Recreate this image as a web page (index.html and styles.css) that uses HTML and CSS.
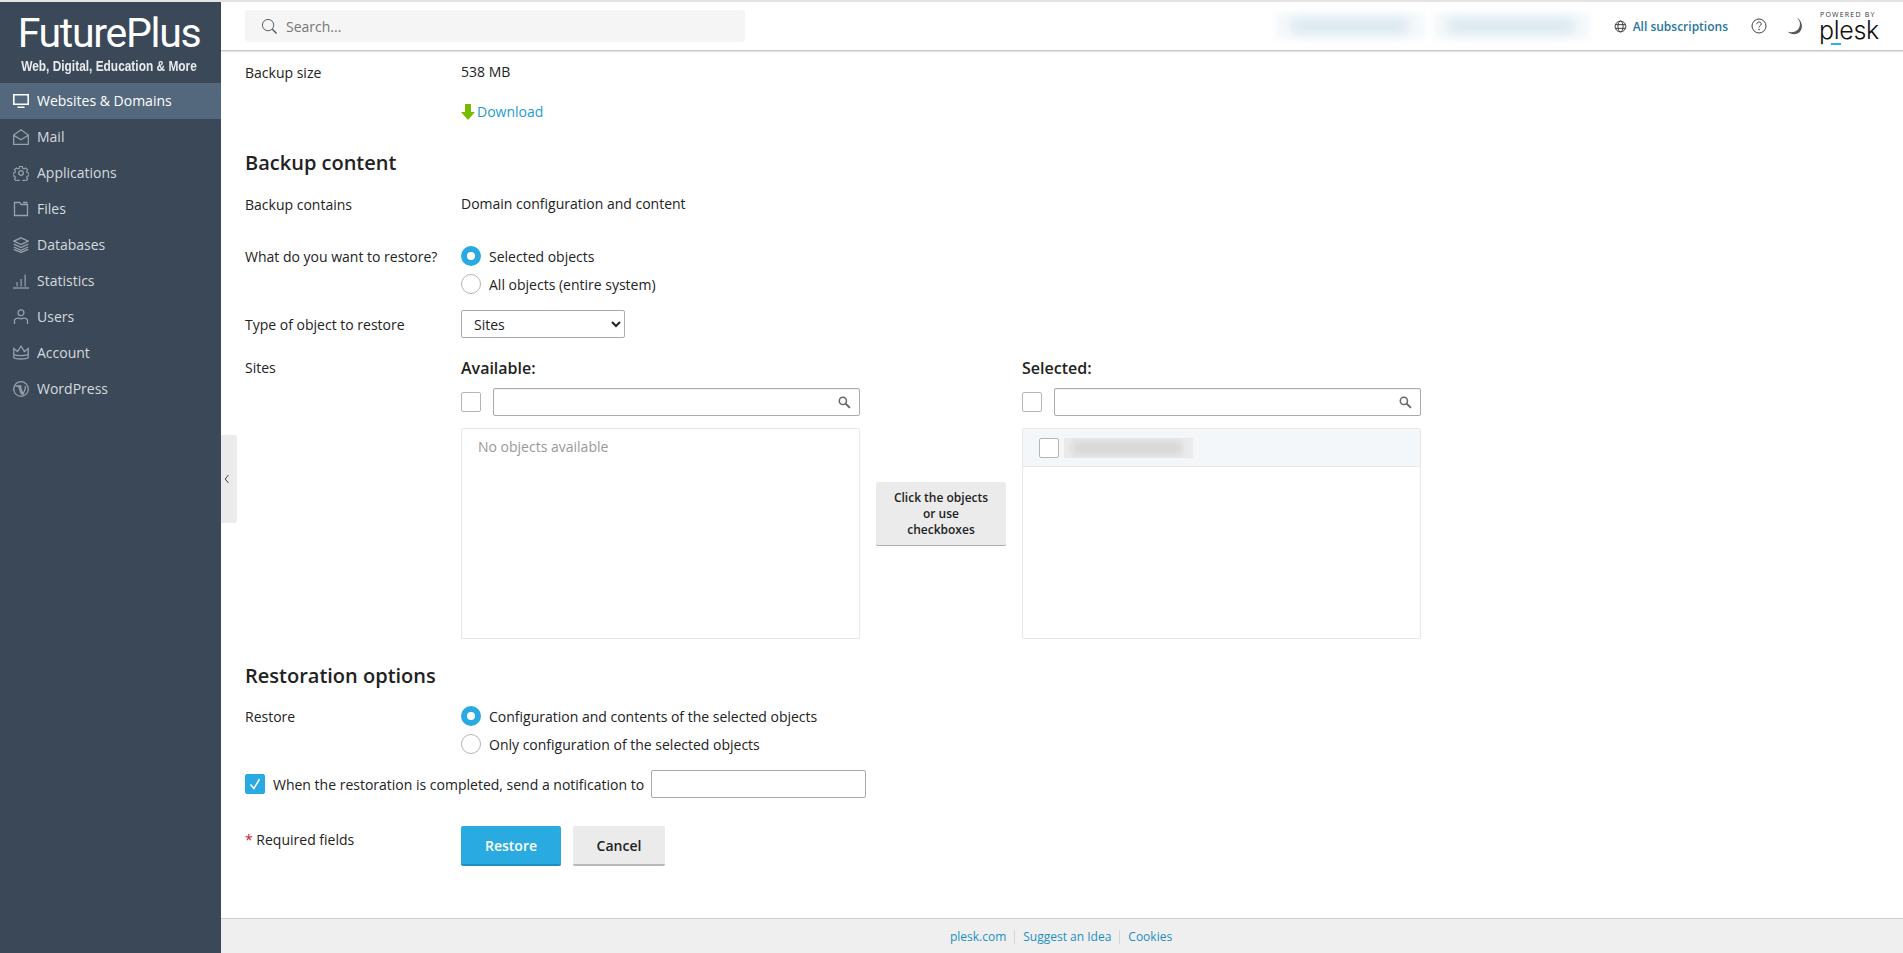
FILE: index.html
```html
<!DOCTYPE html>
<html lang="en">
<head>
<meta charset="utf-8">
<title>Restore backup - Plesk</title>
<link rel="stylesheet" href="styles.css">
</head>
<body>
<div class="topline"></div>
<div class="app">
  <aside class="sidebar">
    <div class="brand">
      <div class="brand-name">FuturePlus</div>
      <div class="brand-tag">Web, Digital, Education &amp; More</div>
    </div>
    <nav class="nav">
      <a class="nav-item active"><svg class="nav-ico" viewBox="0 0 16 16"><path d="M.8 1.800h14.400v9.400H.8z" fill="none" stroke="currentColor" stroke-width="1.600"/><path d="M4.500 13.500h7v1.500h-7z" fill="currentColor"/></svg>Websites &amp; Domains</a>
      <a class="nav-item"><svg class="nav-ico" viewBox="0 0 16 16"><path d="M.7 6v9.300h14.600V6L8 .8zM.7 6.200 8 10.800l7.300-4.600" fill="none" stroke="currentColor"/></svg>Mail</a>
      <a class="nav-item"><svg class="nav-ico" viewBox="0 0 16 16"><path d="M6.500.8h3l.4 2 1.500.7 1.800-1.100 2.100 2.100-1.100 1.800.6 1.500 2 .4v3l-2 .4-.6 1.500 1.100 1.800-2.100 2.100-1.800-1.100-1.500.6-.4 2h-3l-.4-2-1.500-.6-1.800 1.100-2.100-2.100 1.100-1.800-.6-1.500-2-.4v-3l2-.4.6-1.500-1.100-1.800 2.100-2.100 1.800 1.100 1.500-.7z" transform="translate(.8 .8) scale(.9)" fill="none" stroke="currentColor"/><circle cx="8" cy="8" r="2.300" fill="none" stroke="currentColor"/></svg>Applications</a>
      <a class="nav-item"><svg class="nav-ico" viewBox="0 0 16 16"><path d="M1.500 1.500v13h13V3.500H8L6.800 1.500zM10 1.500h4.500" fill="none" stroke="currentColor"/></svg>Files</a>
      <a class="nav-item"><svg class="nav-ico" viewBox="0 0 16 16"><path d="M8 .8 15.200 4.200 8 7.600.8 4.200zM.8 7.200 8 10.600l7.200-3.400M.8 10 8 13.400l7.200-3.400M.8 12.400 8 15.400l7.200-3" fill="none" stroke="currentColor"/></svg>Databases</a>
      <a class="nav-item"><svg class="nav-ico" viewBox="0 0 16 16"><path d="M0 15h16" stroke="currentColor" fill="none"/><path d="M3.500 9h1.200v4.500H3.500zM7.500 6h1.200v7.500H7.500zM11.500 1.500h1.200v12h-1.200z" fill="currentColor"/></svg>Statistics</a>
      <a class="nav-item"><svg class="nav-ico" viewBox="0 0 16 16"><circle cx="8" cy="3.800" r="2.900" fill="none" stroke="currentColor"/><path d="M1.500 15v-3.500c0-1.500 2-2.400 3.500-2.400 1 0 1.700.8 3 .8s2-.8 3-.8c1.500 0 3.500.9 3.500 2.400V15" fill="none" stroke="currentColor"/></svg>Users</a>
      <a class="nav-item"><svg class="nav-ico" viewBox="0 0 16 16"><path d="M.8 3.500 4.500 6.500 8 1.200l3.500 5.300 3.700-3v9.300c-2 1.600-12.400 1.600-14.400 0z" fill="none" stroke="currentColor"/><path d="M.8 9.500c3 1.500 11.400 1.500 14.400 0" fill="none" stroke="currentColor"/></svg>Account</a>
      <a class="nav-item"><svg class="nav-ico" viewBox="0 0 16 16"><circle cx="8" cy="8" r="7.300" fill="none" stroke="currentColor"/><path d="M2.500 5h3l3 8.500M5 5h3.500M7 5l3 8.500 2.300-6c.4-1-.1-1.800-.5-2.500" fill="none" stroke="currentColor"/></svg>WordPress</a>
    </nav>
  </aside>

  <div class="main">
    <header class="topbar">
      <div class="search">
        <svg class="search-ico" viewBox="0 0 18 18"><circle cx="7.500" cy="7.500" r="6" fill="none" stroke="#555"/><path d="M12 12l4.500 4.500" stroke="#555" stroke-width="1.500"/></svg>
        <span class="search-text">Search...</span>
      </div>
      <div class="top-right">
        <div class="blurred blurred-a"><i></i></div>
        <div class="blurred blurred-b"><i></i></div>
        <a class="subs"><svg class="globe" viewBox="0 0 14 14"><circle cx="7" cy="7" r="5.800" fill="none" stroke="#333"/><ellipse cx="7" cy="7" rx="2.800" ry="5.800" fill="none" stroke="#333"/><path d="M1.500 5h11M1.500 9h11" stroke="#333"/></svg>All subscriptions</a>
        <svg class="help" viewBox="0 0 16 16"><circle cx="8" cy="8" r="7" fill="none" stroke="#444"/><path d="M5.800 6.200c0-1.400 1-2.200 2.300-2.200s2.200.8 2.200 2c0 1.600-2.300 1.700-2.300 3.500" fill="none" stroke="#444"/><circle cx="8" cy="11.500" r=".8" fill="#444"/></svg>
        <svg class="moon" viewBox="0 0 16 16"><path d="M9.500.5c3 2.500 3.800 6.500 1.800 9.700C9.600 13 6 14.200 1.500 13.200c3 2.600 7.500 2.800 10.500.3 3.600-3.200 2.600-10.500-2.500-13z" fill="#555"/></svg>
        <div class="plesk">
          <span class="powered">POWERED BY</span>
          <span class="plesk-word">plesk</span>
          <span class="plesk-bar"></span>
        </div>
      </div>
    </header>

    <main class="content">
      <div class="row row-size"><div class="label">Backup size</div><div class="value">538 MB</div></div>
      <div class="row row-download"><div class="label"></div><a class="download"><svg class="dl-ico" viewBox="0 0 14 16"><path d="M4 0h6v8h4l-7 8-7-8h4z" fill="#77bc00"/></svg>Download</a></div>

      <h2 class="section section-content">Backup content</h2>
      <div class="row row-contains"><div class="label">Backup contains</div><div class="value">Domain configuration and content</div></div>

      <div class="row row-what">
        <div class="label">What do you want to restore?</div>
        <div class="radios">
          <label class="radio"><span class="dot on"></span>Selected objects</label>
          <label class="radio"><span class="dot"></span>All objects (entire system)</label>
        </div>
      </div>

      <div class="row row-type">
        <div class="label">Type of object to restore</div>
        <select class="select"><option>Sites</option></select>
      </div>

      <div class="row row-sites">
        <div class="label">Sites</div>
        <div class="picker">
          <div class="pick">
            <div class="pick-title">Available:</div>
            <div class="pick-tools">
              <span class="check"></span>
              <div class="find"><svg class="find-ico" viewBox="0 0 12 12"><circle cx="4.500" cy="4.500" r="3.300" fill="none" stroke="#666" stroke-width="1.400"/><path d="M7 7l4 4" stroke="#666" stroke-width="1.800"/></svg></div>
            </div>
            <div class="list"><div class="empty">No objects available</div></div>
          </div>
          <div class="move"><div class="move-btn">Click the objects or use checkboxes</div></div>
          <div class="pick">
            <div class="pick-title">Selected:</div>
            <div class="pick-tools">
              <span class="check"></span>
              <div class="find"><svg class="find-ico" viewBox="0 0 12 12"><circle cx="4.500" cy="4.500" r="3.300" fill="none" stroke="#666" stroke-width="1.400"/><path d="M7 7l4 4" stroke="#666" stroke-width="1.800"/></svg></div>
            </div>
            <div class="list">
              <div class="list-row"><span class="check"></span><div class="blur-name"><i></i></div></div>
            </div>
          </div>
        </div>
      </div>

      <h2 class="section section-options">Restoration options</h2>
      <div class="row row-restore">
        <div class="label">Restore</div>
        <div class="radios">
          <label class="radio"><span class="dot on"></span>Configuration and contents of the selected objects</label>
          <label class="radio"><span class="dot"></span>Only configuration of the selected objects</label>
        </div>
      </div>

      <div class="notify">
        <span class="check checked"><svg viewBox="0 0 20 20"><path d="M5 10.500l3.800 4.500L15 4.500" fill="none" stroke="#fff" stroke-width="1.700"/></svg></span>
        <span class="notify-text">When the restoration is completed, send a notification to</span>
        <div class="notify-input"></div>
      </div>

      <div class="row row-actions">
        <div class="label label-req"><span class="req">*</span> Required fields</div>
        <div class="actions">
          <button class="btn primary">Restore</button>
          <button class="btn">Cancel</button>
        </div>
      </div>
      <button class="collapse" aria-label="Collapse"><svg viewBox="0 0 6 10"><path d="M4.500 1 1.200 5l3.300 4" fill="none" stroke="#444"/></svg></button>
    </main>

    <footer class="footer">
      <a>plesk.com</a><a>Suggest an Idea</a><a>Cookies</a>
    </footer>
  </div>
</div>
</body>
</html>
```
FILE: styles.css
```css
* { box-sizing: border-box; }
html, body { height: 100%; }
body {
  margin: 0;
  font-family: "Open Sans", sans-serif;
  font-size: 14px;
  color: #222;
  background: #fff;
  overflow: hidden;
}
.topline { height: 2px; background: #e4e4e4; }
.app { display: flex; height: 951px; }

.sidebar { width: 221px; flex: none; background: #3a4858; color: #d5dade; }
.brand { height: 81px; text-align: center; color: #fff; padding: 9px 3px 0 0; }
.brand-name { font-family: Roboto, sans-serif; font-weight: 400; font-size: 41px; line-height: 44px; letter-spacing: -1.3px; }
.brand-tag { font-family: "Liberation Sans", sans-serif; font-weight: 700; font-size: 14px; line-height: 16px; margin-top: 3px; color: #e8eaec; white-space: nowrap; transform: scaleX(.85); }
.nav-item { display: flex; align-items: center; height: 36px; padding: 0 0 1px 13px; }
.nav-item.active { background: #53687d; color: #fff; }
.nav-ico { width: 16px; height: 16px; margin-right: 8px; flex: none; color: #98a1ab; }
.nav-item:not(.active) .nav-ico * { stroke-width: 1.3; }
.active .nav-ico { color: #fff; }

.main { flex: 1; min-width: 0; display: flex; flex-direction: column; }
.topbar { height: 49px; flex: none; display: flex; align-items: center; padding: 0 25px 0 24px; background: #fff; border-bottom: 1px solid #c8c8c8; box-shadow: 0 1px 1px rgba(0,0,0,.1); position: relative; z-index: 1; }
.search { width: 500px; height: 32px; background: #f5f5f5; border-radius: 3px; display: flex; align-items: center; padding-left: 16px; color: #777; }
.search-ico { width: 17px; height: 17px; margin-right: 8px; }
.top-right { margin-left: auto; display: flex; align-items: center; }
.blurred { height: 26px; background: #f5f9fb; filter: blur(3px); display: flex; align-items: center; justify-content: center; }
.blurred i { display: block; height: 16px; background: #dbe8f0; filter: blur(5px); }
.blurred-a { width: 150px; margin-right: 8px; }
.blurred-a i { width: 116px; }
.blurred-b { width: 157px; margin-right: 24px; }
.blurred-b i { width: 126px; }
.subs { display: flex; align-items: center; color: #28759c; font-size: 12px; font-weight: 600; }
.globe { width: 13px; height: 13px; margin-right: 6px; }
.help { width: 16px; height: 16px; margin-left: 23px; }
.moon { width: 18px; height: 18px; margin-left: 19px; }
.plesk { position: relative; display: flex; flex-direction: column; width: 58px; margin-left: 16px; padding-top: 2px; }
.powered { font-size: 7px; line-height: 6px; letter-spacing: 1.2px; white-space: nowrap; color: #333; }
.plesk-word { font-family: Inter, sans-serif; font-weight: 300; font-size: 25px; line-height: 24px; color: #111; letter-spacing: -.3px; margin-left: -1px; }
.plesk-bar { position: absolute; left: 11px; bottom: -3px; width: 10px; height: 2px; background: #2bb3e8; }

.content { flex: 1; position: relative; padding: 0 24px; min-height: 0; }
.row { display: flex; }
.label { width: 216px; flex: none; padding-top: 1px; }
.value { flex: none; }
.row-size { margin-top: 11px; }
.row-download { margin-top: 20px; }
.download { display: flex; align-items: center; color: #1e9ccf; }
.dl-ico { width: 14px; height: 16px; margin-right: 2px; }
.section { margin: 0; font-size: 20px; line-height: 27px; font-weight: 600; color: #222; }
.section-content { margin-top: 28px; }
.row-contains { margin-top: 18px; }
.row-what { margin-top: 32px; }
.radios { display: flex; flex-direction: column; gap: 8px; }
.radio { display: flex; align-items: center; height: 20px; }
.dot { width: 20px; height: 20px; border-radius: 50%; border: 1px solid #b5b5b5; background: #fff; margin-right: 8px; flex: none; }
.dot.on { border: 6px solid #29abe2; }
.row-type { margin-top: 16px; align-items: center; height: 28px; }
.select { width: 164px; height: 28px; font-family: inherit; font-size: 14px; color: #222; background: #fff; border: 1px solid #ababab; border-radius: 2px; padding: 0 8px; }
.row-sites { margin-top: 19px; }
.picker { display: flex; align-items: flex-start; }
.pick { width: 399px; }
.pick-title { font-size: 16px; font-weight: 600; line-height: 22px; margin-bottom: 9px; }
.pick-tools { display: flex; align-items: center; gap: 12px; height: 28px; }
.find { flex: 1; height: 28px; border: 1px solid #ababab; border-radius: 2px; display: flex; align-items: center; justify-content: flex-end; padding-right: 8px; box-shadow: inset 0 1px 1px rgba(0,0,0,.06); }
.find-ico { width: 13px; height: 13px; }
.check { display: inline-block; width: 20px; height: 20px; background: #fff; border: 1px solid #b5b5b5; border-radius: 2px; flex: none; }
.check.checked { background: #29abe2; border-color: #29abe2; }
.check.checked svg { display: block; width: 18px; height: 18px; }
.list { height: 211px; margin-top: 12px; border: 1px solid #e8e8e8; border-radius: 2px; }
.empty { padding: 8px 13px 0 16px; line-height: 19px; color: #999; }
.list-row { display: flex; align-items: center; height: 38px; padding-left: 16px; background: #f4f7fa; border-bottom: 1px solid #e8e8e8; }
.blur-name { width: 129px; height: 20px; margin-left: 5px; background: #ececec; display: flex; align-items: center; padding: 0 8px; overflow: hidden; }
.blur-name i { display: block; width: 110px; height: 14px; background: #d6d6d6; filter: blur(4px); }
.move { width: 162px; padding: 125px 16px 0; }
.move-btn { width: 130px; height: 64px; background: #ebebeb; border-bottom: 1px solid #adadad; border-radius: 2px; font-size: 12px; font-weight: 600; line-height: 16px; text-align: center; padding: 8px 17px 0; color: #222; }
.section-options { margin-top: 23px; }
.row-restore { margin-top: 17px; }
.notify { display: flex; align-items: center; margin-top: 16px; height: 28px; }
.notify-text { margin-left: 8px; }
.notify-input { width: 215px; height: 28px; margin-left: 7px; border: 1px solid #ababab; border-radius: 2px; background: #fff; }
.row-actions { margin-top: 28px; }
.label-req { padding-top: 4px; }
.req { color: #c8202f; }
.actions { display: flex; gap: 12px; }
.btn { width: 92px; height: 40px; background: #ebebeb; border: 0; border-bottom: 2px solid #b8b8b8; border-radius: 2px; font-family: inherit; font-size: 14px; font-weight: 600; color: #222; padding: 0; }
.btn.primary { width: 100px; background: #29abe2; border-bottom-color: #1d8fc0; color: #fff; }
.collapse { position: absolute; left: 0; top: 384px; width: 16px; height: 88px; background: #ebebeb; border: 0; border-radius: 0 3px 3px 0; padding: 0 0 0 3px; display: flex; align-items: center; }
.collapse svg { width: 6px; height: 10px; }
.footer { height: 35px; flex: none; background: #efefef; border-top: 1px solid #cfcfcf; display: flex; justify-content: center; align-items: center; font-size: 12px; padding: 2px 2px 0 0; color: #1c8fc0; }
.footer a { padding: 0 8px; line-height: 14px; }
.footer a + a { border-left: 1px solid #d5d5d5; }
```
